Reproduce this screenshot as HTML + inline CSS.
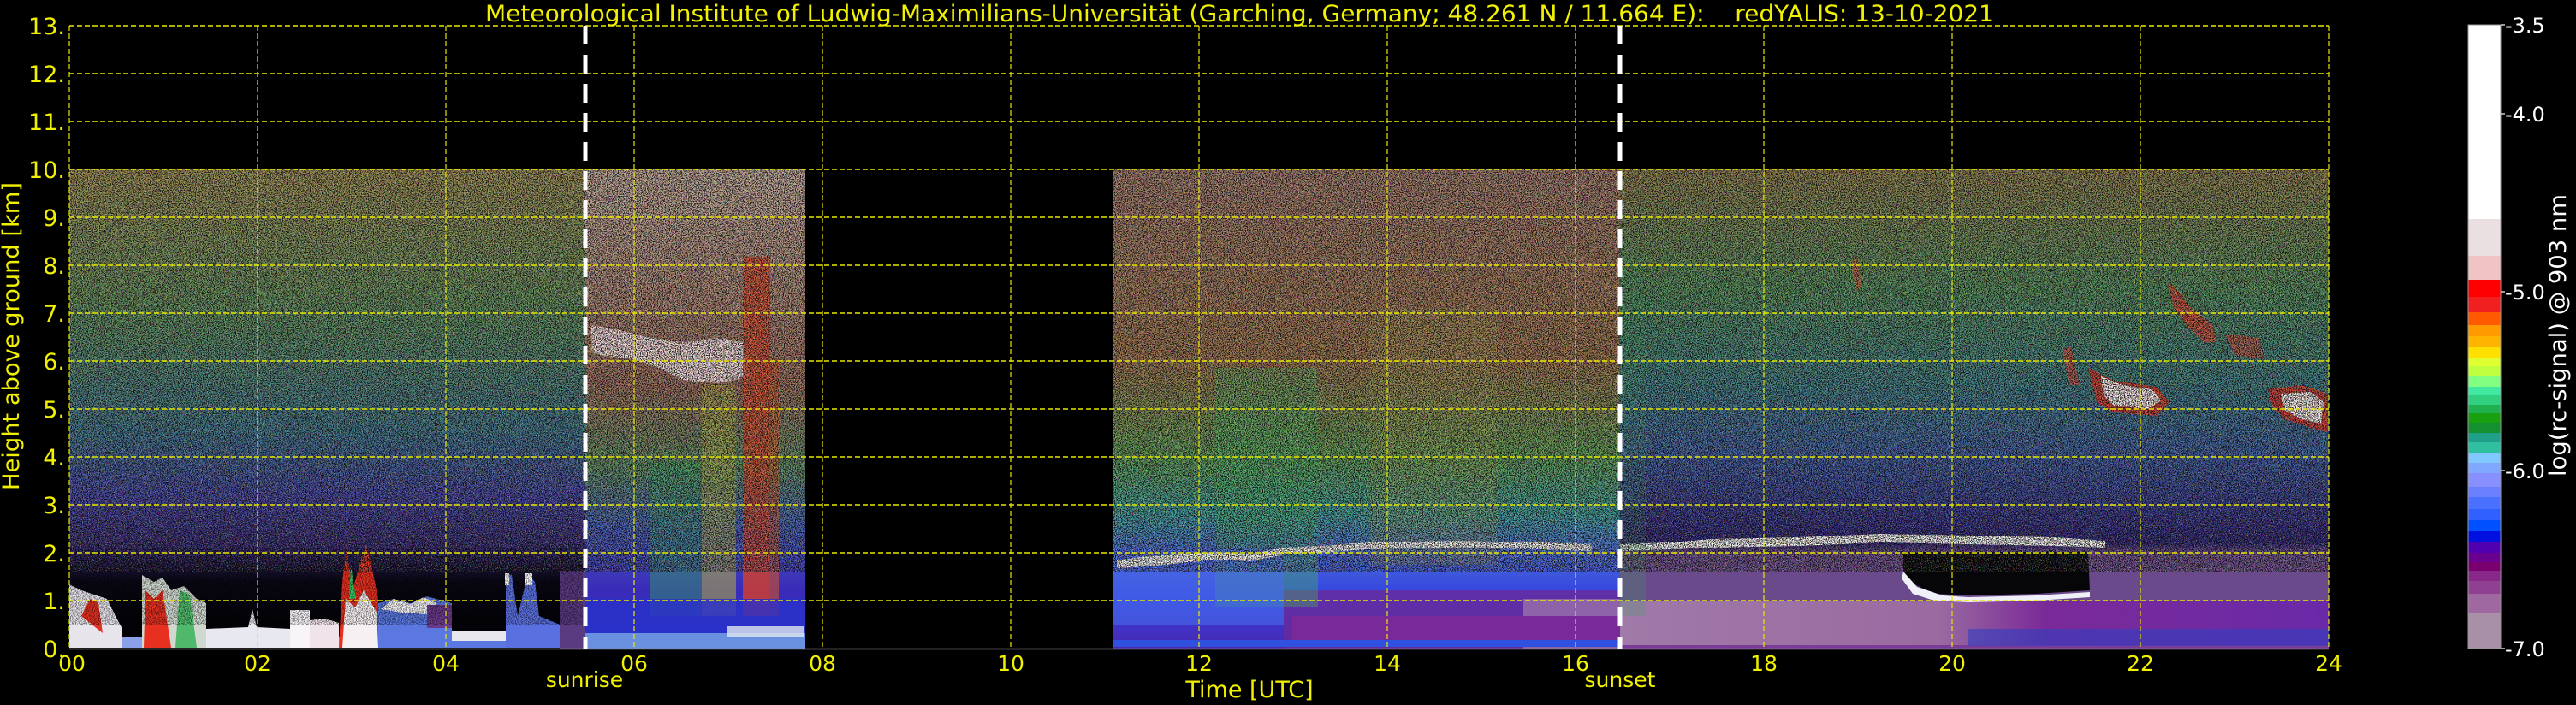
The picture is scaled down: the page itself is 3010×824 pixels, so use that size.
<!DOCTYPE html>
<html><head><meta charset="utf-8"><style>
html,body{margin:0;padding:0;background:#000;width:3010px;height:824px;overflow:hidden}
svg{display:block}
text{font-family:"DejaVu Sans","Liberation Sans",sans-serif}
</style></head><body>
<svg width="3010" height="824" viewBox="0 0 3010 824" xmlns="http://www.w3.org/2000/svg">
<defs>
<filter id="spk" x="0" y="0" width="100%" height="100%">
<feTurbulence type="fractalNoise" baseFrequency="0.85" numOctaves="1" seed="4"/>
<feColorMatrix type="matrix" values="0 0 0 0 0  0 0 0 0 0  0 0 0 0 0  9 0 0 0 -4.2"/>
</filter>
<filter id="cspk" x="0" y="0" width="100%" height="100%">
<feTurbulence type="fractalNoise" baseFrequency="0.9" numOctaves="1" seed="9"/>
<feColorMatrix type="matrix" values="5 0 0 0 -2  0 5 0 0 -2  0 0 5 0 -2  0 0 0 8 -4"/>
</filter>
<linearGradient id="gA" x1="0" y1="198" x2="0" y2="758" gradientUnits="userSpaceOnUse">
<stop offset="0" stop-color="#9a8a50"/><stop offset="0.3" stop-color="#5a8a58"/>
<stop offset="0.55" stop-color="#3a7088"/><stop offset="0.68" stop-color="#4040a0"/>
<stop offset="0.8" stop-color="#302268"/><stop offset="0.86" stop-color="#0a0814"/><stop offset="1" stop-color="#000"/>
</linearGradient>
<linearGradient id="gB" x1="0" y1="198" x2="0" y2="758" gradientUnits="userSpaceOnUse">
<stop offset="0" stop-color="#c0a898"/><stop offset="0.45" stop-color="#9a6a58"/>
<stop offset="0.62" stop-color="#5a8a60"/><stop offset="0.75" stop-color="#4058b8"/>
<stop offset="0.88" stop-color="#3a2ab8"/><stop offset="1" stop-color="#2040d0"/>
</linearGradient>
<linearGradient id="gC" x1="0" y1="198" x2="0" y2="758" gradientUnits="userSpaceOnUse">
<stop offset="0" stop-color="#a07868"/><stop offset="0.4" stop-color="#9a7048"/>
<stop offset="0.6" stop-color="#5a9a50"/><stop offset="0.72" stop-color="#3a9a98"/>
<stop offset="0.8" stop-color="#4868d8"/><stop offset="0.9" stop-color="#3040e0"/><stop offset="1" stop-color="#4a28b0"/>
</linearGradient>
<linearGradient id="gD" x1="0" y1="198" x2="0" y2="758" gradientUnits="userSpaceOnUse">
<stop offset="0" stop-color="#8a7a48"/><stop offset="0.25" stop-color="#508a58"/>
<stop offset="0.45" stop-color="#3a7a80"/><stop offset="0.6" stop-color="#3a58a0"/>
<stop offset="0.74" stop-color="#302a80"/><stop offset="0.78" stop-color="#2a2070"/>
<stop offset="0.8" stop-color="#6a4a8a"/><stop offset="0.9" stop-color="#6a4a8a"/>
<stop offset="0.905" stop-color="#8a5a9a"/><stop offset="1" stop-color="#7a3a98"/>
</linearGradient>
<linearGradient id="gBot" x1="1893" y1="0" x2="2721" y2="0" gradientUnits="userSpaceOnUse">
<stop offset="0" stop-color="#a07aa8"/><stop offset="0.45" stop-color="#9a6aa0"/>
<stop offset="0.6" stop-color="#7a2a98"/><stop offset="1" stop-color="#6a2aa8"/>
</linearGradient>
</defs>

<!-- data regions -->
<rect x="81" y="198" width="603" height="560" fill="url(#gA)"/>
<rect x="654" y="667" width="30" height="91" fill="#5a3a80"/>
<rect x="684" y="198" width="257" height="560" fill="url(#gB)"/>
<rect x="1300" y="198" width="593" height="560" fill="url(#gC)"/>
<rect x="1500" y="690" width="393" height="68" fill="#6a2a98" opacity="0.8"/>
<rect x="1780" y="700" width="113" height="58" fill="#9a70a8" opacity="0.8"/>
<rect x="1893" y="198" width="828" height="560" fill="url(#gD)"/>
<rect x="1893" y="702" width="828" height="52" fill="url(#gBot)"/>
<rect x="2300" y="735" width="421" height="20" fill="#3040c0" opacity="0.6"/>

<!-- morning structures -->
<rect x="81" y="745" width="573" height="12" fill="#8aa0e8"/>
<path d="M81 757 L81 683 L95 690 L110 695 L125 700 L135 720 L143 735 L143 757 Z" fill="#e8e4ec"/>
<path d="M95 720 L105 700 L115 705 L120 740 Z" fill="#e03020"/>
<path d="M166 757 L166 672 L180 680 L190 675 L200 690 L215 685 L230 700 L241 705 L241 757 Z" fill="#d0d8d0"/>
<path d="M168 757 L170 690 L180 700 L190 690 L200 757 Z" fill="#e83020"/>
<path d="M205 757 L210 690 L222 695 L230 757 Z" fill="#30b050" opacity="0.8"/>
<path d="M241 757 L241 735 L290 733 L295 712 L300 733 L339 735 L339 757 Z" fill="#e8e8f0"/>
<rect x="339" y="713" width="23" height="44" fill="#f8f4f8"/>
<path d="M362 757 L362 725 L380 723 L396 728 L396 757 Z" fill="#f0e4ea"/>
<path d="M396 757 L400 680 L405 640 L412 690 L420 660 L428 637 L436 670 L442 700 L442 757 Z" fill="#e83020"/>
<path d="M400 757 L404 700 L415 710 L425 690 L440 715 L442 757 Z" fill="#f6f0f2"/>
<path d="M408 700 L410 660 L416 700 Z" fill="#30c060"/>
<path d="M442 757 L442 705 L460 700 L480 705 L499 697 L528 705 L528 757 Z" fill="#5a78e0"/>
<path d="M445 712 L460 700 L480 706 L495 698 L510 705 L500 718 L470 716 Z" fill="#f0f0f4"/>
<rect x="499" y="707" width="29" height="27" fill="#6a3a8a"/>
<rect x="528" y="737" width="63" height="12" fill="#e8e8ec"/>
<rect x="528" y="749" width="63" height="8" fill="#5a78e0"/>
<path d="M591 757 L591 670 L598 672 L605 720 L617 670 L625 680 L630 720 L654 730 L654 757 Z" fill="#5a70e0"/>
<rect x="590" y="670" width="5" height="14" fill="#f8f8f8"/>
<rect x="614" y="670" width="8" height="14" fill="#f8f8f8"/>

<!-- sunrise-08 structures -->
<path d="M690 380 L720 385 L760 395 L800 400 L840 395 L870 400 L875 440 L840 448 L800 445 L770 430 L740 420 L700 415 L690 410 Z" fill="#f2d8d8"/>
<rect x="868" y="300" width="32" height="420" fill="#e04020" opacity="0.75"/>
<rect x="900" y="420" width="10" height="300" fill="#d05020" opacity="0.6"/>
<rect x="820" y="450" width="40" height="270" fill="#b0b040" opacity="0.55"/>
<rect x="760" y="540" width="60" height="180" fill="#30a060" opacity="0.45"/>
<rect x="684" y="700" width="257" height="40" fill="#2a30c8" opacity="0.8"/>
<rect x="684" y="740" width="257" height="18" fill="#6a90e0"/>
<rect x="850" y="732" width="90" height="12" fill="#e0e8f0" opacity="0.8"/>

<!-- midday structures -->
<rect x="1420" y="430" width="120" height="280" fill="#40b060" opacity="0.4"/>
<rect x="1600" y="360" width="150" height="300" fill="#a0a050" opacity="0.3"/>
<rect x="1300" y="640" width="200" height="90" fill="#4a6ae8" opacity="0.6"/>
<path d="M1305 655 L1340 650 L1380 648 L1420 645 L1460 648 L1500 640 L1540 638 L1600 634 L1700 632 L1800 634 L1860 636 L1860 644 L1800 642 L1700 640 L1600 642 L1540 646 L1500 648 L1460 656 L1420 654 L1380 658 L1340 662 L1305 664 Z" fill="#f4f4f4"/>
<rect x="1510" y="720" width="383" height="28" fill="#7a2a98"/>
<rect x="1300" y="748" width="593" height="8" fill="#3050e0"/>

<!-- evening structures -->
<path d="M1893 636 L1950 634 L2000 630 L2100 628 L2200 624 L2300 626 L2400 628 L2460 632 L2460 640 L2400 638 L2300 636 L2200 634 L2100 638 L2000 640 L1950 642 L1893 644 Z" fill="#f6f6f6"/>
<path d="M2224 645 L2440 645 L2442 690 L2380 694 L2300 696 L2260 694 L2235 682 L2224 668 Z" fill="#060608"/>
<path d="M2224 668 L2240 686 L2270 696 L2300 698 L2380 696 L2442 692 L2442 698 L2380 702 L2300 704 L2260 702 L2235 694 L2222 676 Z" fill="#f0f0f8"/>
<path d="M2440 430 L2470 445 L2520 452 L2535 470 L2520 486 L2470 482 L2450 470 Z" fill="#e03020" opacity="0.85"/>
<path d="M2455 440 L2480 450 L2515 455 L2525 468 L2510 478 L2470 474 L2458 462 Z" fill="#f8e8e8"/>
<path d="M2533 330 L2545 340 L2560 360 L2585 380 L2590 400 L2575 400 L2555 380 L2540 360 Z" fill="#e04030" opacity="0.8"/>
<path d="M2650 455 L2690 450 L2719 460 L2719 505 L2700 500 L2670 490 L2655 475 Z" fill="#e03020" opacity="0.85"/>
<path d="M2665 460 L2700 458 L2715 470 L2712 495 L2690 490 L2670 480 Z" fill="#f8ecec"/>
<path d="M2410 410 L2420 405 L2430 450 L2418 450 Z" fill="#e04030" opacity="0.7"/>
<path d="M2600 390 L2640 395 L2645 420 L2610 415 Z" fill="#e04030" opacity="0.6"/>
<path d="M2163 306 L2170 300 L2176 335 L2168 340 Z" fill="#e06040" opacity="0.7"/>
<rect x="1893" y="300" width="30" height="420" fill="#40a060" opacity="0.25"/>

<!-- noise -->
<rect x="81" y="198" width="2640" height="470" filter="url(#spk)" opacity="0.85"/>
<rect x="81" y="198" width="2640" height="470" filter="url(#cspk)" opacity="0.4"/>
<rect x="81" y="640" width="600" height="90" filter="url(#spk)" opacity="0.5"/>

<!-- gap -->
<rect x="941" y="198" width="359" height="561" fill="#000"/>

<!-- grid -->
<g stroke="#e8e800" stroke-width="1.6" stroke-dasharray="6,3" fill="none">
<path d="M81 30H2721M81 86H2721M81 142H2721M81 198H2721M81 254H2721M81 310H2721M81 366H2721M81 422H2721M81 478H2721M81 534H2721M81 590H2721M81 646H2721M81 702H2721"/>
<path d="M81 30V758M301 30V758M521 30V758M741 30V758M961 30V758M1181 30V758M1401 30V758M1621 30V758M1841 30V758M2061 30V758M2281 30V758M2501 30V758M2721 30V758" stroke-width="1.2"/>
</g>
<path d="M81 758.5H2721" stroke="#888" stroke-width="1.5"/>

<!-- sunrise / sunset -->
<g stroke="#fff" stroke-width="5" stroke-dasharray="22,12">
<path d="M684 30V758"/><path d="M1893 30V758"/>
</g>

<!-- title -->
<text x="567" y="25" font-size="27" fill="#f0f000" textLength="1763" lengthAdjust="spacingAndGlyphs" xml:space="preserve">Meteorological Institute of Ludwig-Maximilians-Universität (Garching, Germany; 48.261 N / 11.664 E):&#160;&#160;&#160;&#160;redYALIS: 13-10-2021</text>

<!-- y ticks -->
<g font-size="27" fill="#f0f000" text-anchor="end">
<text x="76" y="40">13.</text><text x="76" y="96">12.</text><text x="76" y="152">11.</text>
<text x="76" y="208">10.</text><text x="76" y="264">9.</text><text x="76" y="320">8.</text>
<text x="76" y="376">7.</text><text x="76" y="432">6.</text><text x="76" y="488">5.</text>
<text x="76" y="544">4.</text><text x="76" y="600">3.</text><text x="76" y="656">2.</text>
<text x="76" y="712">1.</text><text x="76" y="768">0.</text>
</g>
<text transform="translate(22,393) rotate(-90)" font-size="27" fill="#f0f000" text-anchor="middle" textLength="360" lengthAdjust="spacingAndGlyphs">Height above ground [km]</text>

<!-- x ticks -->
<g font-size="25" fill="#f0f000" text-anchor="middle">
<text x="84" y="784">00</text><text x="301" y="784">02</text><text x="521" y="784">04</text>
<text x="741" y="784">06</text><text x="961" y="784">08</text><text x="1181" y="784">10</text>
<text x="1401" y="784">12</text><text x="1621" y="784">14</text><text x="1841" y="784">16</text>
<text x="2061" y="784">18</text><text x="2281" y="784">20</text><text x="2501" y="784">22</text>
<text x="2721" y="784">24</text>
<text x="683" y="803">sunrise</text><text x="1893" y="803">sunset</text>
</g>
<text x="1460" y="815" font-size="27" fill="#f0f000" text-anchor="middle">Time [UTC]</text>

<!-- colorbar -->
<g>
<rect x="2884" y="29" width="38" height="227" fill="#ffffff"/>
<rect x="2884" y="256" width="38" height="43" fill="#eae0e2"/>
<rect x="2884" y="299" width="38" height="28" fill="#f0c4c4"/>
<rect x="2884" y="327" width="38" height="20" fill="#ff0000"/>
<rect x="2884" y="347" width="38" height="18" fill="#f02020"/>
<rect x="2884" y="365" width="38" height="15" fill="#ff5a00"/>
<rect x="2884" y="380" width="38" height="13" fill="#ff9a00"/>
<rect x="2884" y="393" width="38" height="13" fill="#ffb400"/>
<rect x="2884" y="406" width="38" height="12" fill="#ffe000"/>
<rect x="2884" y="418" width="38" height="10" fill="#e0ff30"/>
<rect x="2884" y="428" width="38" height="12" fill="#c0ff40"/>
<rect x="2884" y="440" width="38" height="12" fill="#80ff80"/>
<rect x="2884" y="452" width="38" height="10" fill="#40e8a0"/>
<rect x="2884" y="462" width="38" height="11" fill="#30d080"/>
<rect x="2884" y="473" width="38" height="10" fill="#20b050"/>
<rect x="2884" y="483" width="38" height="11" fill="#18a010"/>
<rect x="2884" y="494" width="38" height="12" fill="#149030"/>
<rect x="2884" y="506" width="38" height="11" fill="#20a088"/>
<rect x="2884" y="517" width="38" height="13" fill="#30c0a0"/>
<rect x="2884" y="530" width="38" height="11" fill="#80c8ff"/>
<rect x="2884" y="541" width="38" height="12" fill="#80a8ff"/>
<rect x="2884" y="553" width="38" height="16" fill="#8890ff"/>
<rect x="2884" y="569" width="38" height="12" fill="#6a80ff"/>
<rect x="2884" y="581" width="38" height="14" fill="#4a70ff"/>
<rect x="2884" y="595" width="38" height="13" fill="#3060ff"/>
<rect x="2884" y="608" width="38" height="13" fill="#0050ff"/>
<rect x="2884" y="621" width="38" height="13" fill="#0010e0"/>
<rect x="2884" y="634" width="38" height="12" fill="#5000b0"/>
<rect x="2884" y="646" width="38" height="11" fill="#6a0090"/>
<rect x="2884" y="657" width="38" height="10" fill="#7a0070"/>
<rect x="2884" y="667" width="38" height="12" fill="#882888"/>
<rect x="2884" y="679" width="38" height="15" fill="#904090"/>
<rect x="2884" y="694" width="38" height="23" fill="#a068a0"/>
<rect x="2884" y="717" width="38" height="41" fill="#a890a8"/>
<rect x="2884" y="29" width="38" height="729" fill="none" stroke="#999" stroke-width="1"/>
</g>
<g stroke="#ccc" stroke-width="1.5">
<path d="M2922 29h5M2922 133h5M2922 341h5M2922 550h5M2922 758h5"/>
</g>
<g font-size="24" fill="#fff">
<text x="2927" y="38">-3.5</text><text x="2927" y="142">-4.0</text>
<text x="2927" y="350">-5.0</text><text x="2927" y="559">-6.0</text><text x="2927" y="767">-7.0</text>
</g>
<text transform="translate(2998,392) rotate(-90)" font-size="27" fill="#fff" text-anchor="middle" textLength="330" lengthAdjust="spacingAndGlyphs">log(rc-signal) @ 903 nm</text>
</svg>
</body></html>
